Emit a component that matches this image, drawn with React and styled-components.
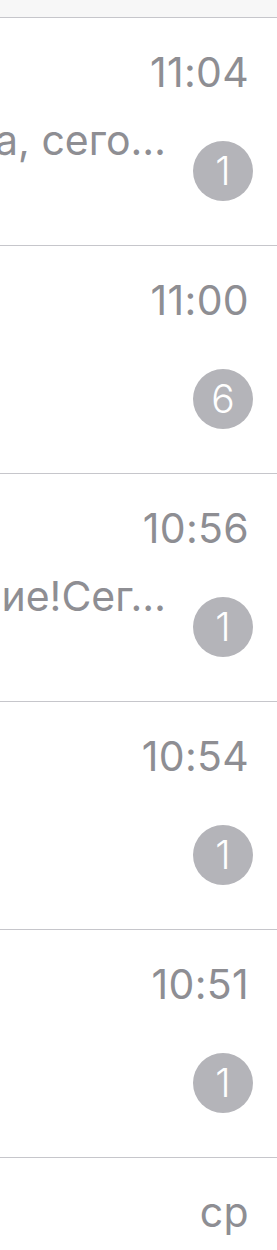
import React from "react";
import styled, { createGlobalStyle } from "styled-components";

const Global = createGlobalStyle`
  html, body { margin: 0; padding: 0; background: #ffffff; }
  body { font-family: Inter, "Noto Sans", "Liberation Sans", sans-serif; -webkit-font-smoothing: antialiased; }
`;

const Screen = styled.div`
  width: 277px;
  height: 1250px;
  overflow: hidden;
`;

const TopBar = styled.div`
  height: 17px;
  background: #f7f7f7;
`;

const Row = styled.div`
  box-sizing: border-box;
  height: 228px;
  border-top: 1px solid #c6c6cb;
  padding: 29px 24px 0 0;
  display: flex;
  flex-direction: column;
`;

const TimeLine = styled.div`
  display: flex;
  justify-content: flex-end;
  padding-right: 4px;
`;

const Time = styled.span`
  font-size: 41px;
  line-height: 50px;
  color: #8e8e93;
  letter-spacing: 0.3px;
`;

const BottomLine = styled.div`
  display: flex;
  align-items: flex-start;
  margin-top: 18px;
`;

const Preview = styled.div`
  flex: 1;
  min-width: 0;
  display: flex;
  justify-content: flex-end;
  overflow: hidden;
  margin-right: 27px;
  font-size: 41px;
  line-height: 50px;
  color: #8e8e93;
  white-space: nowrap;
`;

const Badge = styled.div`
  flex: none;
  width: 60px;
  height: 60px;
  margin-top: 26px;
  border-radius: 50%;
  background: #b4b4b9;
  color: #ffffff;
  font-size: 39px;
  font-weight: 300;
  line-height: 60px;
  text-align: center;
`;

const chats = [
  { time: "11:04", preview: "а, сего…", badge: 1 },
  { time: "11:00", preview: "", badge: 6 },
  { time: "10:56", preview: "ие!Сег…", badge: 1 },
  { time: "10:54", preview: "", badge: 1 },
  { time: "10:51", preview: "", badge: 1 },
  { time: "ср", preview: "", badge: null },
];

export default function App() {
  return (
    <Screen>
      <Global />
      <TopBar />
      {chats.map((c, i) => (
        <Row key={i}>
          <TimeLine>
            <Time>{c.time}</Time>
          </TimeLine>
          {c.badge !== null && (
            <BottomLine>
              <Preview>{c.preview}</Preview>
              <Badge>{c.badge}</Badge>
            </BottomLine>
          )}
        </Row>
      ))}
    </Screen>
  );
}
